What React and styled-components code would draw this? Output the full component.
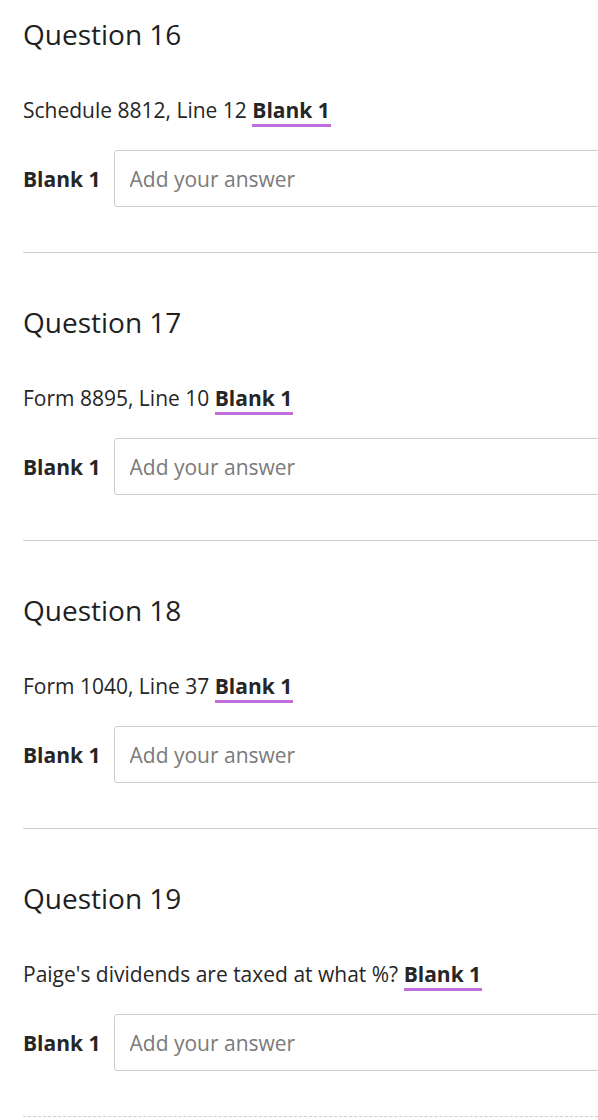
import React from "react";
import styled, { createGlobalStyle } from "styled-components";

const Global = createGlobalStyle`
  html, body { margin: 0; padding: 0; background: #fff; overflow: hidden; }
  body { font-family: "Open Sans", "Noto Sans", sans-serif; color: #262626; }
`;

const Page = styled.main`
  padding: 0 0 0 23px;
  width: 575px;
`;

const Section = styled.section`
  padding: ${(p) => (p.$first ? "15px" : "50px")} 0 45px;
  border-bottom: 1px ${(p) => (p.$last ? "dashed" : "solid")} #cdcdcd;
`;

const Heading = styled.h2`
  margin: 0;
  font-size: 28px;
  line-height: 38px;
  font-weight: 500;
  color: #1f1f1f;
`;

const Prompt = styled.p`
  margin: 42px 0 0;
  font-size: 21px;
  line-height: 30px;
  color: #262626;
`;

const BlankRef = styled.span`
  font-weight: 700;
  border-bottom: 3px solid #c26ddb;
  padding: 0 1px 0 0;
`;

const Row = styled.div`
  margin-top: 25px;
  display: flex;
  align-items: center;
  gap: 13px;
`;

const Label = styled.label`
  font-size: 21px;
  font-weight: 700;
  color: #262626;
  white-space: nowrap;
`;

const Input = styled.input`
  flex: none;
  width: 600px;
  height: 57px;
  box-sizing: border-box;
  border: 1px solid #cdcdcd;
  border-radius: 3px;
  padding: 0 15px;
  font-family: "Open Sans", "Noto Sans", sans-serif;
  font-size: 21px;
  color: #262626;
  outline: none;
  &::placeholder { color: #7a7a7a; }
`;

const questions = [
  { n: 16, text: "Schedule 8812, Line 12" },
  { n: 17, text: "Form 8895, Line 10" },
  { n: 18, text: "Form 1040, Line 37" },
  { n: 19, text: "Paige's dividends are taxed at what %?" },
];

export default function App() {
  return (
    <>
      <Global />
      <Page>
        {questions.map((q, i) => (
          <Section key={q.n} $first={i === 0} $last={i === questions.length - 1}>
            <Heading>Question {q.n}</Heading>
            <Prompt>
              {q.text} <BlankRef>Blank 1</BlankRef>
            </Prompt>
            <Row>
              <Label htmlFor={`q${q.n}`}>Blank 1</Label>
              <Input id={`q${q.n}`} placeholder="Add your answer" />
            </Row>
          </Section>
        ))}
      </Page>
    </>
  );
}
